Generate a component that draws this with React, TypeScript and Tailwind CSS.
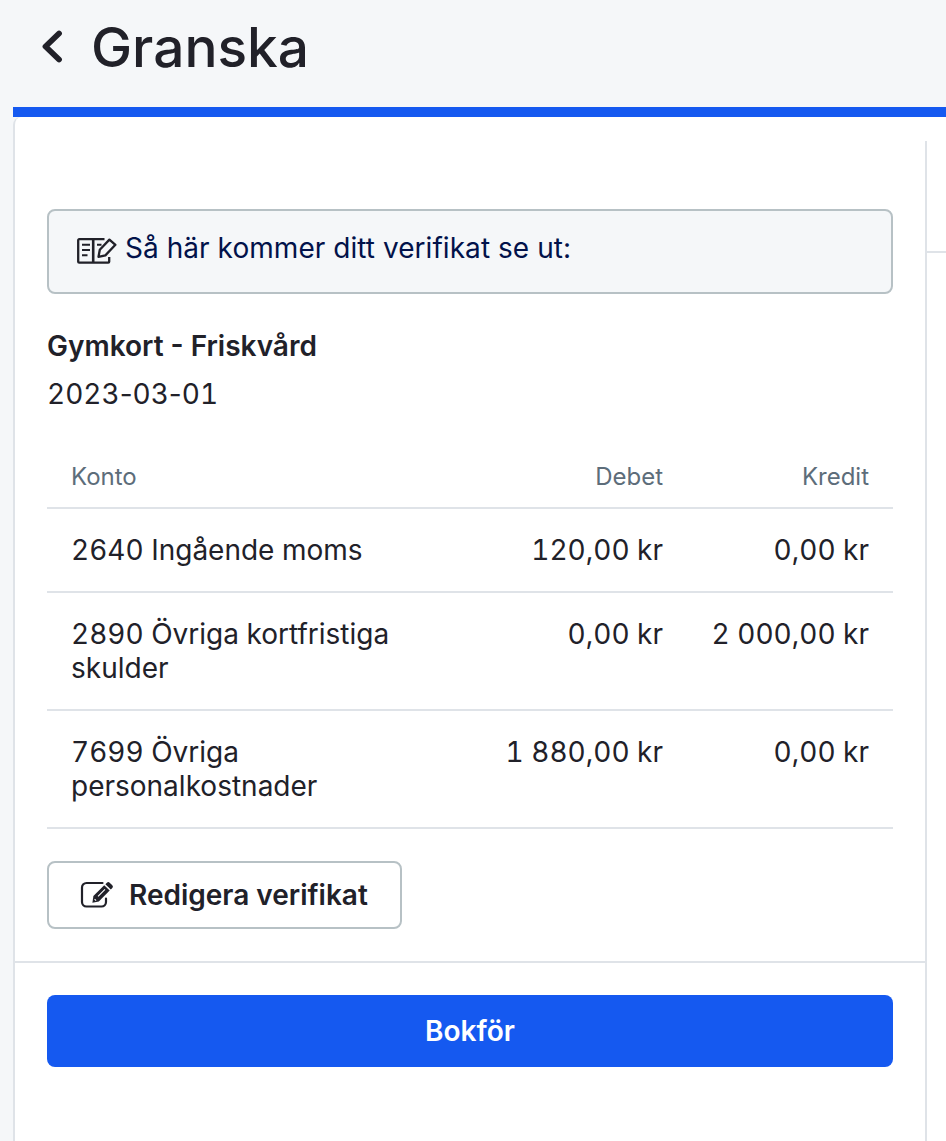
import React from "react";

const rows = [
  { account: "2640 Ingående moms", debit: "120,00 kr", credit: "0,00 kr" },
  {
    account: "2890 Övriga kortfristiga skulder",
    debit: "0,00 kr",
    credit: "2 000,00 kr",
  },
  {
    account: "7699 Övriga personalkostnader",
    debit: "1 880,00 kr",
    credit: "0,00 kr",
  },
];

const BackIcon = () => (
  <svg className="w-[24px] h-[36px]" viewBox="0 0 24 36" fill="none">
    <path
      d="M19 4.5 5.5 17.5 19 30.5"
      stroke="currentColor"
      strokeWidth="5.8"
      strokeLinecap="round"
      strokeLinejoin="round"
    />
  </svg>
);

const LedgerIcon = () => (
  <svg
    className="w-[40px] h-[26px] shrink-0"
    viewBox="0 0 40 26"
    fill="none"
    stroke="currentColor"
    strokeWidth="2.3"
    strokeLinejoin="round"
  >
    <path d="M27.5 1.2H2.2a1 1 0 0 0-1 1v21.5a1 1 0 0 0 1 1h29a1 1 0 0 0 1-1V19" />
    <path d="M16.2 1v24" strokeWidth="2.6" />
    <path d="M5 6.8h8M5 12h8M5 17.2h5.5M20 6.8h4.5" strokeWidth="2" />
    <path d="M21.5 18.8l1.3-7L32.4 1.6l6 5.2L28.4 17.4z" />
  </svg>
);

const EditIcon = () => (
  <svg className="w-[34px] h-[28px] shrink-0" viewBox="0 0 34 28" fill="none">
    <path
      d="M22.5 2H6.5A4.5 4.5 0 0 0 2 6.500v14.500A4.500 4.500 0 0 0 6.500 25.500h15a4.500 4.500 0 0 0 4.500-4.500V17.500"
      stroke="currentColor"
      strokeWidth="2.2"
      strokeLinecap="round"
    />
    <path d="M12.4 21.8l1-6.800L24.200 4.200l5.500 5.200L18.800 20.400z" fill="currentColor" />
    <path d="M25.400 3.200l1.500-1.500a2 2 0 0 1 2.800 0l2.600 2.500a2 2 0 0 1 0 2.800l-1.500 1.400z" fill="currentColor" />
    <path d="M18 15.300l7-7M14.600 18.100l1.500 1.500" stroke="white" strokeWidth="1.100" />
  </svg>
);

// Digits line up in columns, the hyphens keep their natural width
const DateText = ({ value }: { value: string }) => (
  <p className="text-[28px] leading-[48px] tabular-nums">
    {value.split("-").map((part, index) => (
      <React.Fragment key={index}>
        {index > 0 && <span className="proportional-nums">-</span>}
        {part}
      </React.Fragment>
    ))}
  </p>
);

const App = () => {
  return (
    <div className="flex flex-col w-full h-[1141px] overflow-hidden bg-[#f5f7f9] text-[#212129] font-['Inter','Liberation_Sans',sans-serif]">
      <header className="flex items-center h-[107px] pl-[40px] pb-[13px] shrink-0">
        <BackIcon />
        <h1 className="ml-[27px] text-[55px] leading-none font-medium">
          Granska
        </h1>
      </header>

      <div className="flex flex-col grow ml-[13px]">
        <div className="h-[10px] bg-[#1559f0] shrink-0" />
        <div className="flex grow">
          <main className="w-[912px] shrink-0 bg-white border-l-2 border-[#dfe3e8] rounded-tl-[8px]">
            <div className="h-[846px] px-8 pt-[92px] border-b-2 border-[#dfe3e8]">
              <div className="flex h-[85px] pl-[28px] pt-[20px] rounded-[8px] border-2 border-[#b7c1c5] bg-[#f5f7f9]">
                <div className="pt-[7px]">
                  <LedgerIcon />
                </div>
                <p className="ml-2 text-[28px] leading-[34px] tracking-[0.05px] text-[#02124a]">
                  Så här kommer ditt verifikat se ut:
                </p>
              </div>

              <h2 className="mt-[28px] text-[28px] leading-[48px] font-semibold">
                Gymkort - Friskvård
              </h2>
              <DateText value="2023-03-01" />

              <table className="w-full mt-[27px] table-fixed border-collapse text-[28px] leading-[34px] tabular-nums">
                <colgroup>
                  <col className="w-[402px]" />
                  <col className="w-[238px]" />
                  <col className="w-[206px]" />
                </colgroup>
                <thead>
                  <tr className="h-[63px] border-b-2 border-[#dfe3e8] text-[24px] leading-[30px] text-[#5d6d7a]">
                    <th className="pt-[2px] pl-6 font-normal text-left">Konto</th>
                    <th className="pt-[2px] pr-6 font-normal text-right">Debet</th>
                    <th className="pt-[2px] pr-6 font-normal text-right">Kredit</th>
                  </tr>
                </thead>
                <tbody>
                  {rows.map((row) => (
                    <tr
                      key={row.account}
                      className="align-top border-b-2 border-[#dfe3e8]"
                    >
                      <td className="py-6 pl-6">{row.account}</td>
                      <td className="py-6 pr-6 text-right">{row.debit}</td>
                      <td className="py-6 pr-6 text-right">{row.credit}</td>
                    </tr>
                  ))}
                </tbody>
              </table>

              <button className="flex items-center w-[355px] h-[68px] mt-[32px] pl-[31px] rounded-[8px] border-2 border-[#b7c1c5] text-[28px] font-semibold">
                <EditIcon />
                <span className="ml-[15px]">Redigera verifikat</span>
              </button>
            </div>

            <div className="px-8 pt-8">
              <button className="w-full h-[72px] rounded-[8px] bg-[#1559f0] text-[28px] font-semibold text-white">
                Bokför
              </button>
            </div>
          </main>

          <aside className="flex flex-col grow pt-[24px] bg-white">
            <div className="grow border-l-2 border-[#dfe3e8]">
              <div className="h-[112px] border-b-2 border-[#dfe3e8]" />
            </div>
          </aside>
        </div>
      </div>
    </div>
  );
};

export default App;
